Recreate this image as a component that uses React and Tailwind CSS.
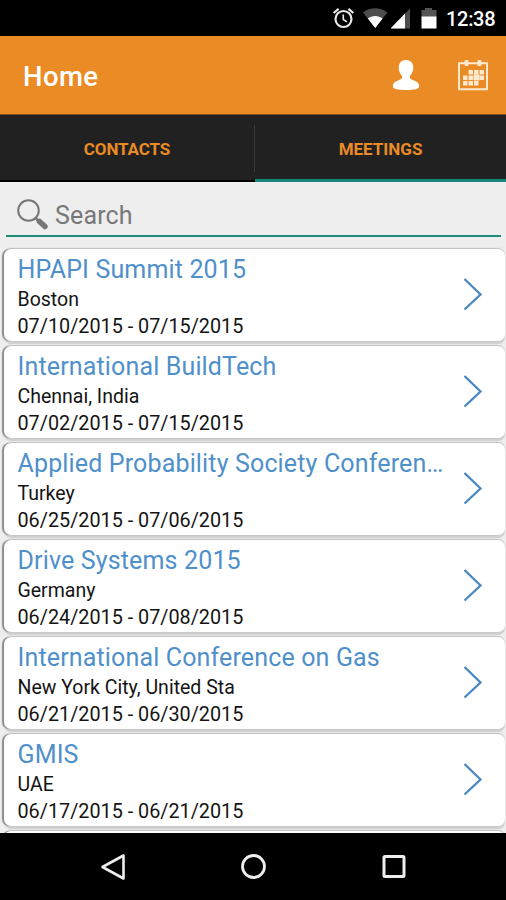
import React from 'react';

const meetings = [
  { title: 'HPAPI Summit 2015', place: 'Boston', dates: '07/10/2015 - 07/15/2015' },
  { title: 'International BuildTech', place: 'Chennai, India', dates: '07/02/2015 - 07/15/2015' },
  { title: 'Applied Probability Society Conferen…', place: 'Turkey', dates: '06/25/2015 - 07/06/2015' },
  { title: 'Drive Systems 2015', place: 'Germany', dates: '06/24/2015 - 07/08/2015' },
  { title: 'International Conference on Gas', place: 'New York City, United Sta', dates: '06/21/2015 - 06/30/2015' },
  { title: 'GMIS', place: 'UAE', dates: '06/17/2015 - 06/21/2015' },
];

const StatusBar = () => (
  <div className="flex h-9 shrink-0 items-center bg-black pl-[332px] text-white">
    {/* Alarm */}
    <svg className="h-6 w-6 shrink-0" viewBox="0 0 24 24" fill="none" stroke="#e8e8e8" strokeWidth="2.2">
      <circle cx="11.5" cy="13" r="8" />
      <path d="M11.3 8.5v5l3.6 2.3" strokeWidth="1.6" />
      <path d="M1.6 7l5-4.200M21.400 7l-5-4.200" />
    </svg>
    {/* Wifi */}
    <svg className="ml-[7px] h-6 w-6 shrink-0" viewBox="0 0 24 24">
      <path d="M0 6.5C7 .9 17.4.9 24.4 6.5L12.2 22z" fill="#4d4d4d" />
      <path d="M4.8 12.600c4.200-3.400 10.600-3.400 14.800 0L12.200 22z" fill="#fff" />
    </svg>
    {/* Signal */}
    <svg className="ml-1 h-6 w-5 shrink-0" viewBox="0 0 20 24">
      <path d="M-.5 22.5L19 2.5v20z" fill="#4d4d4d" />
      <path d="M-.5 22.5L14 7.6v14.9z" fill="#fff" />
    </svg>
    {/* Battery */}
    <svg className="ml-2.5 h-6 w-4 shrink-0" viewBox="0 0 16 24">
      <path d="M.5 4H4V2h7v2h4.500v7H.5z" fill="#555" />
      <path d="M.5 10.500h15v12H.5z" fill="#fff" />
    </svg>
    <span className="ml-[9px] mt-0.5 text-[20px] font-medium leading-6 tracking-[-0.3px]">12:38</span>
  </div>
);

const PersonIcon = () => (
  <svg className="h-8 w-7" viewBox="0 0 28 32" fill="#fff">
    <path d="M14 1c4.500 0 7.300 3.100 7.300 7.600 0 3.500-1.500 6.500-3.300 8.300v2.200c.4 1 2 1.700 4 2.500 3.300 1.300 5.200 3.100 5.200 5.600 0 2.700-5 3.800-13.200 3.800S.8 29.900.8 27.200c0-2.500 1.900-4.300 5.200-5.600 2-.8 3.600-1.500 4-2.500v-2.200c-1.800-1.800-3.300-4.800-3.300-8.300C6.700 4.100 9.500 1 14 1z" />
  </svg>
);

const days = [
  [11.5, 11], [17, 11], [22.500, 11],
  [6, 16.500], [11.5, 16.500], [17, 16.500], [22.500, 16.500],
  [6, 22], [11.5, 22], [17, 22],
];

const CalendarIcon = () => (
  <svg className="h-8 w-8" viewBox="0 0 32 32" fill="#ffe9cf">
    <path d="M2 4.200h28v26H2z" fill="none" stroke="#ffe9cf" strokeWidth="2" />
    <rect x="7.500" y="1" width="4" height="6" rx="1" />
    <rect x="20.500" y="1" width="4" height="6" rx="1" />
    {days.map(([x, y]) => (
      <rect key={`${x}-${y}`} x={x} y={y} width="4.500" height="4.500" rx="0.5" />
    ))}
    <rect x="16.500" y="15.500" width="6" height="6" />
  </svg>
);

const Header = () => (
  <div className="flex h-[79px] shrink-0 items-center border-b border-[#80501c] bg-[#ea8b25] pl-[23px] pr-[17px] text-white">
    <h1 className="mt-[3px] flex-1 text-[27.5px] font-medium leading-8 tracking-[0.4px]">Home</h1>
    <PersonIcon />
    <div className="ml-[37.5px]">
      <CalendarIcon />
    </div>
  </div>
);

const Tabs = () => (
  <div className="flex h-[67px] shrink-0 bg-[#212121] text-[17px] font-bold text-[#ea8b25]">
    <div className="flex w-[255px] border-b-2 border-black pt-2.5 pb-2">
      <div className="flex flex-1 items-center justify-center border-r border-[#3a3a3a] pt-0.5 tracking-[-0.1px]">CONTACTS</div>
    </div>
    <div className="flex flex-1 items-center justify-center border-b-[3px] border-[#17877a] pt-1.5">MEETINGS</div>
  </div>
);

const Search = () => (
  <div className="ml-1.5 mr-[5px] flex h-[55px] shrink-0 items-center border-b-2 border-[#1f8c7a] pl-[11px] pt-3">
    <svg className="h-8 w-8" viewBox="0 0 32 32" fill="none" stroke="#777">
      <circle cx="11.500" cy="11.500" r="10.300" strokeWidth="2" />
      <path d="M18.500 19l3 3" strokeWidth="2.500" />
      <path d="M22.500 22.500l5.500 5" strokeWidth="5.500" strokeLinecap="round" />
    </svg>
    <span className="ml-[6px] pt-0.5 text-[25px] leading-8 tracking-[0.15px] text-[#787878]">Search</span>
  </div>
);

const cardStyle = 'ml-1 mr-px shrink-0 rounded-[7px] bg-white shadow-[-2px_0_1px_#8c8c8c,0_-1px_1px_#c4c4c4,0_3px_1px_#cfcfcf]';

const MeetingCard = ({ title, place, dates }) => (
  <div className={`${cardStyle} flex h-[92px] items-center pl-[13.5px] pr-[22px]`}>
    <div className="min-w-0 flex-1 whitespace-nowrap pt-[4px]">
      <h2 className="text-[25px] leading-[32px] tracking-[0.15px] text-[#4f90cb]">{title}</h2>
      <p className="text-[19.5px] leading-[27px] text-[#141414]">{place}</p>
      <p className="text-[19.8px] leading-[27px] text-[#141414]">{dates}</p>
    </div>
    <svg className="mb-[2px] h-9 w-5 shrink-0" viewBox="0 0 20 36" fill="none" stroke="#4a87c2" strokeWidth="2.300">
      <path d="M1.500 3L17.500 18.500 1.500 33.500" />
    </svg>
  </div>
);

const NavBar = () => (
  <div className="flex h-[67px] shrink-0 items-center bg-black pl-[99px]">
    <svg className="h-8 w-7" viewBox="0 0 28 32" fill="none" stroke="#eee" strokeWidth="2.600">
      <path d="M24.500 4.500v23L3.500 16z" strokeLinejoin="round" />
    </svg>
    <svg className="ml-[112px] h-7 w-7" viewBox="0 0 28 28" fill="none" stroke="#eee" strokeWidth="2.800">
      <circle cx="14.500" cy="13.500" r="11" />
    </svg>
    <svg className="ml-[113px] h-7 w-7" viewBox="0 0 28 28" fill="none" stroke="#eee" strokeWidth="3">
      <rect x="4" y="3.500" width="20" height="20" rx="1" />
    </svg>
  </div>
);

export default function App() {
  return (
    <div className="flex h-[900px] w-[506px] flex-col overflow-hidden bg-[#eee] font-['Roboto',sans-serif]">
      <StatusBar />
      <Header />
      <Tabs />
      <Search />
      <div className="flex min-h-0 flex-1 flex-col gap-[5px] overflow-hidden pt-3">
        {meetings.map((m) => (
          <MeetingCard key={m.title} {...m} />
        ))}
        <div className={`${cardStyle} h-[92px]`} />
      </div>
      <NavBar />
    </div>
  );
}
